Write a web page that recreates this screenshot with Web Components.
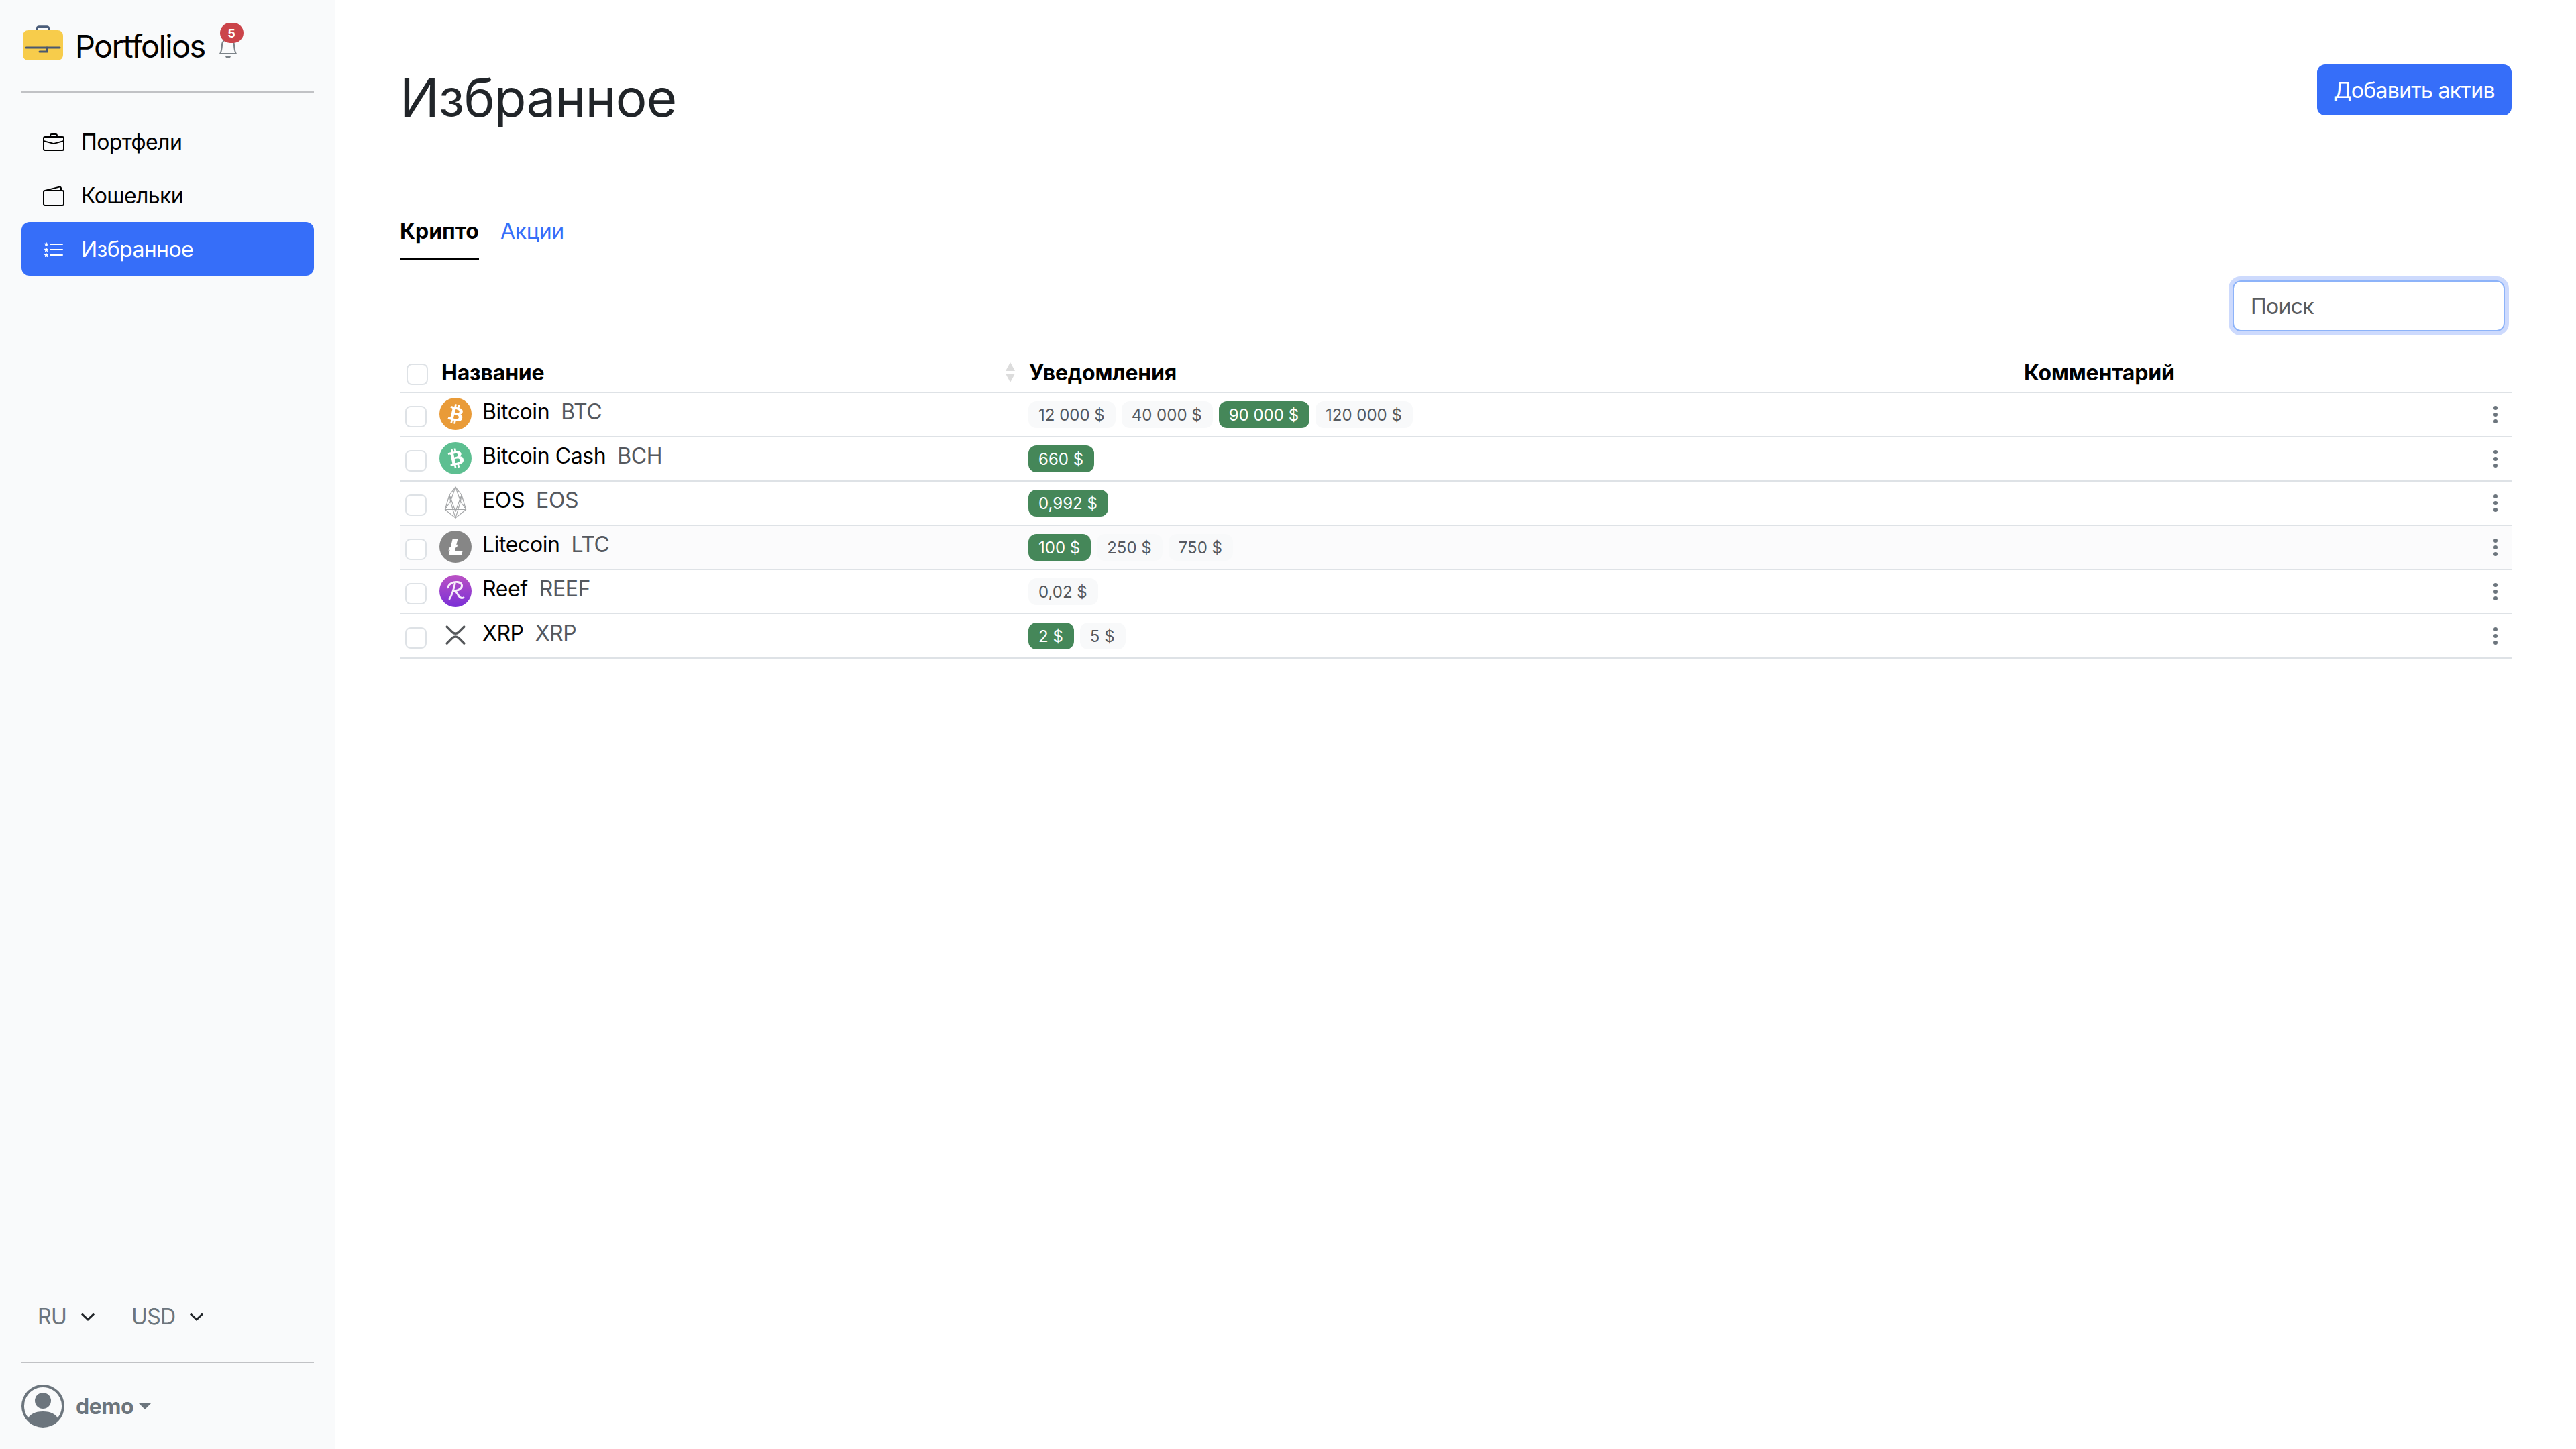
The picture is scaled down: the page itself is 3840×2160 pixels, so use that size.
<!DOCTYPE html>
<html lang="ru">
<head>
<meta charset="utf-8">
<title>Portfolios</title>
<style>
  html, body { margin: 0; height: 100%; }
  body {
    font-family: Inter, "Liberation Sans", sans-serif;
    color: #000;
    background: #fff;
    display: flex;
  }
</style>
</head>
<body>
<app-sidebar>
  <side-link icon="briefcase">Портфели</side-link>
  <side-link icon="wallet">Кошельки</side-link>
  <side-link icon="stars" active>Избранное</side-link>
</app-sidebar>
<favorites-page></favorites-page>

<script>
// bootstrap-icons style paths, 16x16 box
const star = "M2.242 2.194a.27.27 0 0 1 .516 0l.162.53c.035.115.14.194.258.194h.551c.259 0 .37.333.164.493l-.468.363a.277.277 0 0 0-.094.3l.173.569c.078.256-.213.462-.423.3l-.417-.324a.267.267 0 0 0-.328 0l-.417.323c-.21.163-.5-.043-.423-.299l.173-.57a.277.277 0 0 0-.094-.299l-.468-.363c-.206-.16-.095-.493.164-.493h.55a.271.271 0 0 0 .259-.194l.162-.53z";
const ICONS = {
  briefcase: `<path d="M6.5 1A1.5 1.5 0 0 0 5 2.5V3H1.5A1.5 1.5 0 0 0 0 4.5v8A1.5 1.5 0 0 0 1.5 14h13a1.5 1.5 0 0 0 1.5-1.5v-8A1.5 1.5 0 0 0 14.5 3H11v-.5A1.5 1.5 0 0 0 9.5 1h-3zm0 1h3a.5.5 0 0 1 .5.5V3H6v-.5a.5.5 0 0 1 .5-.5zm1.886 6.914L15 7.151V12.5a.5.5 0 0 1-.5.5h-13a.5.5 0 0 1-.5-.5V7.15l6.614 1.764a1.5 1.5 0 0 0 .772 0zM1.5 4h13a.5.5 0 0 1 .5.5v1.616L8.129 7.948a.5.5 0 0 1-.258 0L1 6.116V4.5a.5.5 0 0 1 .5-.5z"/>`,
  wallet: `<path d="M12.136.326A1.5 1.5 0 0 1 14 1.78V3h.5A1.5 1.5 0 0 1 16 4.5v9a1.5 1.5 0 0 1-1.5 1.5h-13A1.5 1.5 0 0 1 0 13.5v-9a1.5 1.5 0 0 1 1.432-1.499L12.136.326zM5.562 3H13V1.78a.5.5 0 0 0-.621-.484L5.562 3zM1.5 4a.5.5 0 0 0-.5.5v9a.5.5 0 0 0 .5.5h13a.5.5 0 0 0 .5-.5v-9a.5.5 0 0 0-.5-.5h-13z"/>`,
  stars: `<path d="M5 11.5a.5.5 0 0 1 .5-.5h9a.5.5 0 0 1 0 1h-9a.5.5 0 0 1-.5-.5zm0-4a.5.5 0 0 1 .5-.5h9a.5.5 0 0 1 0 1h-9a.5.5 0 0 1-.5-.5zm0-4a.5.5 0 0 1 .5-.5h9a.5.5 0 0 1 0 1h-9a.5.5 0 0 1-.5-.5z"/><path d="${star}"/><path transform="translate(0 4)" d="${star}"/><path transform="translate(0 8)" d="${star}"/>`,
  bell: `<path d="M8 16a2 2 0 0 0 2-2H6a2 2 0 0 0 2 2zM8 1.918l-.797.161A4.002 4.002 0 0 0 4 6c0 .628-.134 2.197-.459 3.742-.16.767-.376 1.566-.663 2.258h10.244c-.287-.692-.502-1.49-.663-2.258C12.134 8.197 12 6.628 12 6a4.002 4.002 0 0 0-3.203-3.92L8 1.917zM14.22 12c.223.447.481.801.78 1H1c.299-.199.557-.553.78-1C2.68 10.2 3 6.88 3 6c0-2.42 1.72-4.44 4.005-4.901a1 1 0 1 1 1.99 0A5.002 5.002 0 0 1 13 6c0 .88.32 4.2 1.22 6z"/>`,
  person: `<path d="M11 6a3 3 0 1 1-6 0 3 3 0 0 1 6 0z"/><path fill-rule="evenodd" d="M0 8a8 8 0 1 1 16 0A8 8 0 0 1 0 8zm8-7a7 7 0 0 0-5.468 11.37C3.242 11.226 4.805 10 8 10s4.757 1.225 5.468 2.37A7 7 0 0 0 8 1z"/>`,
  dots: `<path d="M9.5 13a1.5 1.5 0 1 1-3 0 1.5 1.5 0 0 1 3 0zm0-5a1.5 1.5 0 1 1-3 0 1.5 1.5 0 0 1 3 0zm0-5a1.5 1.5 0 1 1-3 0 1.5 1.5 0 0 1 3 0z"/>`,
};
const svg16 = (name, size) =>
  `<svg xmlns="http://www.w3.org/2000/svg" width="${size}" height="${size}" viewBox="0 0 16 16" fill="currentColor">${ICONS[name]}</svg>`;

// coin logos, 32x32 box
const BTC_B = "M23.189 14.02c.314-2.096-1.283-3.223-3.465-3.975l.708-2.84-1.728-.43-.69 2.765c-.454-.114-.92-.22-1.385-.326l.695-2.783L15.596 6l-.708 2.839c-.376-.086-.746-.17-1.104-.26l.002-.009-2.384-.595-.46 1.846s1.283.294 1.256.312c.7.175.826.638.805 1.006l-.806 3.235c.048.012.11.03.18.057l-.183-.045-1.13 4.532c-.086.212-.303.531-.793.41.018.025-1.256-.313-1.256-.313l-.858 1.978 2.25.561c.418.105.828.215 1.231.318l-.715 2.872 1.727.43.708-2.84c.472.127.93.245 1.378.357l-.706 2.828 1.728.43.715-2.866c2.948.558 5.164.333 6.097-2.333.752-2.146-.037-3.385-1.588-4.192 1.13-.26 1.98-1.003 2.207-2.538zm-3.95 5.538c-.533 2.147-4.148.986-5.32.695l.95-3.805c1.172.293 4.929.872 4.37 3.11zm.535-5.569c-.487 1.953-3.495.96-4.47.717l.86-3.45c.975.243 4.118.696 3.61 2.733z";
const COINS = {
  btc: `<circle cx="16" cy="16" r="16" fill="#e99b38"/><path fill="#fff" fill-rule="evenodd" d="${BTC_B}"/>`,
  bch: `<circle cx="16" cy="16" r="16" fill="#5dbf91"/><path fill="#fff" fill-rule="evenodd" transform="rotate(-26 16 16)" d="${BTC_B}"/>`,
  eos: `<g fill="none" stroke="#a4a6a8" stroke-width=".8" stroke-linejoin="round"><path d="M16 .7 10 8.5 5.6 23 16 31.4 26.4 23 22 8.5z"/><path d="M16 .7 11 15 16 31.4 21 15z"/><path d="M10 8.5 11 15 5.6 23M22 8.5 21 15 26.4 23M5.6 23H26.4M10 8.5 16 25 22 8.5"/></g>`,
  ltc: `<circle cx="16" cy="16" r="16" fill="#868686"/><path fill="#fff" d="M10.427 19.214L9 19.768l.688-2.759 1.444-.58L13.213 8h5.129l-1.519 6.196 1.41-.571-.68 2.75-1.427.571-.848 3.483H23L22.127 24H9.252z"/>`,
  reef: `<defs><linearGradient id="rf" x1="0" y1="0" x2="0" y2="1"><stop offset="0" stop-color="#bb52c4"/><stop offset="1" stop-color="#7a2fd6"/></linearGradient></defs><circle cx="16" cy="16" r="16" fill="url(#rf)"/><path fill="none" stroke="#fff" stroke-opacity=".9" stroke-width="1.9" stroke-linecap="round" stroke-linejoin="round" d="M8.5 12.5C9.5 8.5 14 6.5 18 7c4 .5 5.5 3.5 3.5 6-1.8 2.2-5 2.8-7.5 2.8 2.5.3 3.7 2.2 5 4.7 1.2 2.2 2.8 3.2 5 2M15.5 8.5C14.5 13 12.5 20 10 24"/>`,
  xrp: `<g fill="none" stroke="#55585b" stroke-width="2.4" stroke-linecap="round"><path d="M7.5 7.5 12.8 12.8c1.8 1.8 4.6 1.8 6.4 0L24.5 7.5"/><path d="M7.5 24 12.8 18.7c1.8-1.8 4.6-1.8 6.4 0L24.5 24"/></g>`,
};

class CheckBox extends HTMLElement {
  constructor() {
    super();
    this.attachShadow({ mode: "open" }).innerHTML = `
      <style>
        :host { display: block; width: 32px; height: 32px; box-sizing: border-box;
          border: 2px solid #dee2e6; border-radius: 8px; background: #fff; }
      </style>`;
  }
}
customElements.define("check-box", CheckBox);

class SideLink extends HTMLElement {
  constructor() {
    super();
    this.attachShadow({ mode: "open" });
  }
  connectedCallback() {
    const active = this.hasAttribute("active");
    this.shadowRoot.innerHTML = `
      <style>
        :host { display: flex; align-items: center; height: 80px; box-sizing: border-box;
          padding-left: 32px; gap: 25px; font-size: 32px; letter-spacing: -.6px; border-radius: 12px;
          color: ${active ? "#fff" : "#000"}; background: ${active ? "#366ef9" : "transparent"}; }
        svg { display: block; margin-top: 3px; }
      </style>
      ${svg16(this.getAttribute("icon"), 32)}<span><slot></slot></span>`;
  }
}
customElements.define("side-link", SideLink);

class AppSidebar extends HTMLElement {
  constructor() {
    super();
    this.attachShadow({ mode: "open" }).innerHTML = `
      <style>
        :host { display: flex; flex-direction: column; box-sizing: border-box;
          width: 500px; height: 2160px; flex: none; padding: 0 32px; background: #f9fafb; }
        .brand { display: flex; align-items: center; height: 136px; border-bottom: 2px solid #c1c2c5;
          font-size: 47px; letter-spacing: -1.7px; }
        .brand .logo { margin: 0 18px 8px 2px; display: block; }
        .bell { position: relative; margin-left: 18px; width: 32px; height: 32px; color: #7b8288; top: 3px; }
        .bell svg { display: block; }
        .badge { position: absolute; left: 4px; top: -21px; width: 35px; height: 30px; border-radius: 15px;
          background: #cb444a; color: #fff; font-size: 18px; font-weight: 700; letter-spacing: 0;
          display: flex; align-items: center; justify-content: center; }
        nav { display: flex; flex-direction: column; margin-top: 33px; flex: 1; }
        .selects { display: flex; align-items: center; height: 60px; padding-left: 24px; color: #6c757d;
          font-size: 32px; letter-spacing: -.7px; }
        .selects svg { display: block; margin: 2px 0 0 21px; }
        .selects span + svg + span { margin-left: 54px; }
        .user { display: flex; align-items: center; height: 128px; border-top: 2px solid #c1c2c5; color: #6c757d;
          font-size: 32px; font-weight: 700; }
        .user svg { display: block; }
        .user span { margin-left: 17px; letter-spacing: -.5px; }
        .caret { margin-left: 8px; width: 0; height: 0; border: 9px solid transparent; border-top-color: #6c757d; border-bottom: 0; }
      </style>
      <div class="brand">
        <svg class="logo" width="60" height="52" viewBox="0 0 60 52">
          <path d="M21 10V5a3 3 0 0 1 3-3h12a3 3 0 0 1 3 3v5" fill="none" stroke="#4b5d7a" stroke-width="3.4"/>
          <rect x="0" y="7" width="60" height="45" rx="8" fill="#f7cc4b"/>
          <path d="M5 33H55" stroke="#4b5870" stroke-width="3.2" stroke-linecap="round"/>
          <path d="M36 33v6H25" fill="none" stroke="#4b5870" stroke-width="3" stroke-linecap="round"/>
        </svg>
        <span>Portfolios</span>
        <div class="bell">${svg16("bell", 32)}<div class="badge">5</div></div>
      </div>
      <nav><slot></slot></nav>
      <div class="selects">
        <span>RU</span>
        <svg width="22" height="14" viewBox="0 0 22 14"><path d="M2 2.5 11 11 20 2.5" fill="none" stroke="#212529" stroke-width="3"/></svg>
        <span>USD</span>
        <svg width="22" height="14" viewBox="0 0 22 14"><path d="M2 2.5 11 11 20 2.5" fill="none" stroke="#212529" stroke-width="3"/></svg>
      </div>
      <div style="height:38px"></div>
      <div class="user">${svg16("person", 64)}<span>demo</span><div class="caret"></div></div>`;
  }
}
customElements.define("app-sidebar", AppSidebar);

class AlertPill extends HTMLElement {
  constructor() {
    super();
    this.attachShadow({ mode: "open" }).innerHTML = `
      <style>
        :host { display: inline-flex; align-items: center; height: 40px; padding: 0 16px 0 15px; border-radius: 12px;
          font-size: 24px; white-space: nowrap; background: #f8f9fa; color: #55595f; }
        :host([hit]) { background: #458759; color: #fff; }
      </style><slot></slot>`;
  }
}
customElements.define("alert-pill", AlertPill);

const GRID = "62px 876px 1483px 1fr 50px";

class CoinRow extends HTMLElement {
  constructor() {
    super();
    this.attachShadow({ mode: "open" });
  }
  connectedCallback() {
    const d = this.data;
    this.shadowRoot.innerHTML = `
      <style>
        :host { display: grid; grid-template-columns: ${GRID}; height: 66px; box-sizing: border-box;
          border-bottom: 2px solid #dee2e6; align-items: center; font-size: 32px; }
        :host([shade]) { background: #fbfbfc; }
        check-box { margin: 6px 0 0 8px; }
        .name { display: flex; align-items: center; }
        .name svg { display: block; margin: -2px 16px 0 -3px; flex: none; }
        .txt { margin-top: -10px; white-space: nowrap; letter-spacing: -.4px; }
        .tick { color: #55595f; margin-left: 17px; }
        .pills { display: flex; gap: 9px; margin-left: -1px; }
        .menu { color: #6c757d; justify-self: end; display: block; margin-right: 8px; }
        .menu svg { display: block; }
      </style>
      <check-box></check-box>
      <div class="name">
        <svg width="48" height="48" viewBox="0 0 32 32">${COINS[d.coin]}</svg>
        <div class="txt">${d.name}<span class="tick">${d.tick}</span></div>
      </div>
      <div class="pills">${d.pills.map(([t, hit]) => `<alert-pill ${hit ? "hit" : ""}>${t}</alert-pill>`).join("")}</div>
      <div></div>
      <div class="menu">${svg16("dots", 32)}</div>`;
  }
}
customElements.define("coin-row", CoinRow);

const ROWS = [
  { coin: "btc", name: "Bitcoin", tick: "BTC", pills: [["12 000 $"], ["40 000 $"], ["90 000 $", 1], ["120 000 $"]] },
  { coin: "bch", name: "Bitcoin Cash", tick: "BCH", pills: [["660 $", 1]] },
  { coin: "eos", name: "EOS", tick: "EOS", pills: [["0,992 $", 1]] },
  { coin: "ltc", name: "Litecoin", tick: "LTC", pills: [["100 $", 1], ["250 $"], ["750 $"]], shade: true },
  { coin: "reef", name: "Reef", tick: "REEF", pills: [["0,02 $"]] },
  { coin: "xrp", name: "XRP", tick: "XRP", pills: [["2 $", 1], ["5 $"]] },
];

class CoinTable extends HTMLElement {
  constructor() {
    super();
    const root = this.attachShadow({ mode: "open" });
    root.innerHTML = `
      <style>
        :host { display: block; }
        .head { display: grid; grid-template-columns: ${GRID}; height: 60px; box-sizing: border-box;
          border-bottom: 2px solid #dee2e6; align-items: center; font-size: 32px; font-weight: 700; letter-spacing: -.2px; }
        .head check-box { margin-left: 10px; margin-top: 5px; }
        .sort { display: flex; align-items: center; justify-content: space-between; padding-right: 20px; }
        .sort svg { display: block; }
      </style>
      <div class="head">
        <check-box></check-box>
        <div class="sort"><span>Название</span>
          <svg width="16" height="30" viewBox="0 0 16 30" fill="#dcdcdc"><path d="M8 0 15 13H1z"/><path d="M8 30 15 17H1z"/></svg>
        </div>
        <div>Уведомления</div>
        <div>Комментарий</div>
        <div></div>
      </div>`;
    ROWS.forEach((r) => {
      const row = document.createElement("coin-row");
      row.data = r;
      if (r.shade) row.setAttribute("shade", "");
      root.appendChild(row);
    });
  }
}
customElements.define("coin-table", CoinTable);

class FavoritesPage extends HTMLElement {
  constructor() {
    super();
    this.attachShadow({ mode: "open" }).innerHTML = `
      <style>
        :host { display: block; flex: 1; box-sizing: border-box; padding: 96px 96px 0 96px; min-width: 0; }
        .top { display: flex; justify-content: space-between; align-items: flex-start; height: 218px; }
        h1 { margin: 0; font-size: 78px; font-weight: 400; color: #212529; line-height: 100px; letter-spacing: -.9px; }
        .add { display: flex; align-items: center; justify-content: center; width: 290px; height: 76px; box-sizing: border-box;
          border-radius: 12px; background: #366ef9; color: #fff; font-size: 32px; letter-spacing: -.7px; }
        .tabs { display: flex; gap: 32px; height: 74px; font-size: 32px; }
        .tab { height: 74px; box-sizing: border-box; line-height: 62px; white-space: nowrap; }
        .tab.on { font-weight: 700; border-bottom: 4px solid #000; width: 118px; }
        .tab.off { color: #366ef9; letter-spacing: -.3px; }
        .search { display: flex; justify-content: flex-end; margin: 30px 10px 0 0; }
        .input { width: 406px; height: 76px; box-sizing: border-box; border: 2px solid #8db3f9; border-radius: 12px;
          box-shadow: 0 0 0 6px #cddafd; display: flex; align-items: center; padding-left: 25px; font-size: 32px; letter-spacing: -.7px; color: #595c5f; }
        coin-table { margin-top: 32px; }
      </style>
      <div class="top">
        <h1>Избранное</h1>
        <div class="add">Добавить актив</div>
      </div>
      <div class="tabs"><div class="tab on">Крипто</div><div class="tab off">Акции</div></div>
      <div class="search"><div class="input">Поиск</div></div>
      <coin-table></coin-table>`;
  }
}
customElements.define("favorites-page", FavoritesPage);
</script>
</body>
</html>
